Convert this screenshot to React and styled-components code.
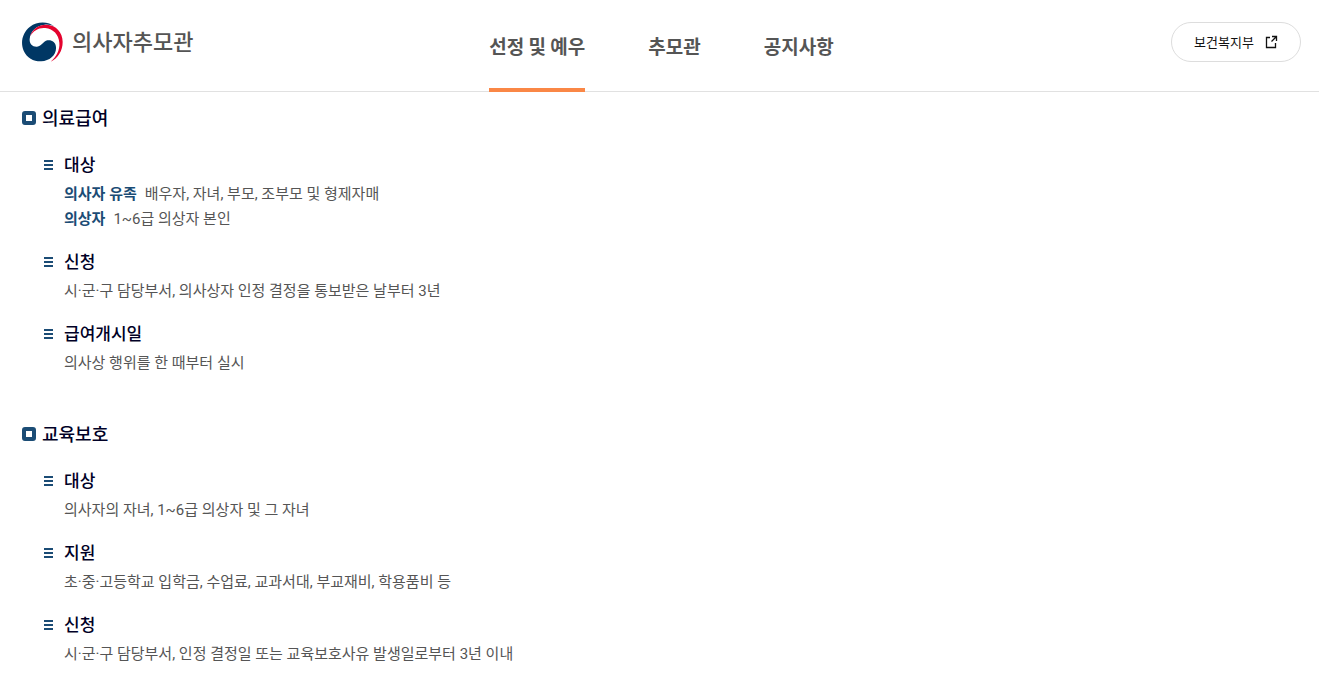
import React from "react";
import styled, { createGlobalStyle } from "styled-components";

const GlobalStyle = createGlobalStyle`
  *, *::before, *::after { box-sizing: border-box; }
  body {
    margin: 0;
    background: #fff;
    color: #555;
    font-family: Roboto, "Noto Sans CJK KR", sans-serif;
    font-size: 15px;
    line-height: 25px;
  }
  h1, h2, h3, p, ul { margin: 0; padding: 0; }
  ul { list-style: none; }
  a { color: inherit; text-decoration: none; }
`;

const Header = styled.header`
  display: grid;
  grid-template-columns: 1fr auto 1fr;
  height: 92px;
  padding: 0 18px 0 22px;
  border-bottom: 1px solid #e1e1e1;
`;

const Brand = styled.a`
  display: flex;
  align-items: center;
  justify-self: start;
  gap: 9px;
  height: 40px;
  margin-top: 22px;
  color: #555;
  font-size: 22px;
  font-weight: 500;
  white-space: nowrap;
`;

const Nav = styled.nav`
  display: flex;
  gap: 63px;
  font-family: "Noto Sans CJK KR", sans-serif;
`;

const NavLink = styled.a`
  display: flex;
  align-items: center;
  height: 92px;
  padding-top: 3px;
  border-bottom: 4px solid ${(p) => (p.$active ? "#fa8746" : "transparent")};
  color: #555;
  font-size: 19px;
  font-weight: 700;
  white-space: nowrap;
`;

const SiteLink = styled.a`
  display: flex;
  align-items: center;
  justify-content: center;
  justify-self: end;
  gap: 10px;
  height: 40px;
  width: 130px;
  margin-top: 22px;
  border: 1px solid #ddd;
  border-radius: 20px;
  color: #111;
  font-size: 13px;
  white-space: nowrap;
`;

const Main = styled.main`
  display: flex;
  flex-direction: column;
  gap: 45px;
  padding: 13px 22px 24px;
`;

const SectionTitle = styled.h2`
  display: flex;
  align-items: center;
  gap: 6px;
  margin-bottom: 19px;
  color: #000026;
  font-size: 18px;
  font-weight: 500;
  line-height: 28px;

  &::before {
    content: "";
    width: 14px;
    height: 14px;
    margin-bottom: 2px;
    border: 4px solid #1b4c75;
    border-radius: 3px;
  }
`;

const ItemList = styled.ul`
  display: flex;
  flex-direction: column;
  gap: 17px;
  padding-left: 22px;
`;

const ItemTitle = styled.h3`
  display: flex;
  align-items: center;
  gap: 10px;
  margin-bottom: 3px;
  color: #000026;
  font-size: 17px;
  font-weight: 500;
  line-height: 27px;
`;

const Line = styled.p`
  padding-left: 20px;
`;

const Term = styled.strong`
  margin-right: 8px;
  color: #1b4c75;
  font-weight: 700;
`;

function Emblem() {
  return (
    <svg width="41" height="40" viewBox="0 0 123 120" aria-hidden="true">
      <path
        fill="#003764"
        d="M98 14C80-2 47-4 24 14C2 31-6 61 5 86C15 108 36 119 58 118C83 117 104 99 102 75C101 60 89 53 76 55C64 57 60 73 45 74C31 75 22 65 23 51C25 28 43 10 68 8C79 7 89 9 98 14Z"
      />
      <path
        fill="#e4032e"
        d="M24 43C32 20 51 7 74 8C102 9 122 31 122 60C122 86 108 109 86 119C103 104 114 84 112 62C110 37 94 21 70 18C51 16 35 25 24 43Z"
      />
    </svg>
  );
}

function ExternalIcon() {
  return (
    <svg width="14" height="14" viewBox="0 0 14 14" fill="none" stroke="#111" strokeWidth="1.3" aria-hidden="true">
      <path d="M6 2.5H2.5V12.5H11.5V8M8 1.5H12.5V6M12.5 1.5L7.5 6.5" />
    </svg>
  );
}

function ListIcon() {
  return (
    <svg width="10" height="11" viewBox="0 0 10 11" fill="#1b4c75" aria-hidden="true">
      <path d="M0 0H9V2H0ZM0 4H9V6H0ZM0 8H9V10H0Z" />
    </svg>
  );
}

const menu = ["선정 및 예우", "추모관", "공지사항"];

const sections = [
  {
    title: "의료급여",
    items: [
      {
        title: "대상",
        lines: [
          { term: "의사자 유족", text: "배우자, 자녀, 부모, 조부모 및 형제자매" },
          { term: "의상자", text: "1~6급 의상자 본인" },
        ],
      },
      { title: "신청", lines: [{ text: "시·군·구 담당부서, 의사상자 인정 결정을 통보받은 날부터 3년" }] },
      { title: "급여개시일", lines: [{ text: "의사상 행위를 한 때부터 실시" }] },
    ],
  },
  {
    title: "교육보호",
    items: [
      { title: "대상", lines: [{ text: "의사자의 자녀, 1~6급 의상자 및 그 자녀" }] },
      { title: "지원", lines: [{ text: "초·중·고등학교 입학금, 수업료, 교과서대, 부교재비, 학용품비 등" }] },
      { title: "신청", lines: [{ text: "시·군·구 담당부서, 인정 결정일 또는 교육보호사유 발생일로부터 3년 이내" }] },
    ],
  },
];

export default function App() {
  return (
    <>
      <GlobalStyle />
      <Header>
        <Brand href="#">
          <Emblem />
          의사자추모관
        </Brand>
        <Nav>
          {menu.map((label, i) => (
            <NavLink key={label} href="#" $active={i === 0}>
              {label}
            </NavLink>
          ))}
        </Nav>
        <SiteLink href="#">
          보건복지부
          <ExternalIcon />
        </SiteLink>
      </Header>
      <Main>
        {sections.map((section) => (
          <section key={section.title}>
            <SectionTitle>{section.title}</SectionTitle>
            <ItemList>
              {section.items.map((item) => (
                <li key={item.title}>
                  <ItemTitle>
                    <ListIcon />
                    {item.title}
                  </ItemTitle>
                  {item.lines.map((line) => (
                    <Line key={line.text}>
                      {line.term && <Term>{line.term}</Term>}
                      {line.text}
                    </Line>
                  ))}
                </li>
              ))}
            </ItemList>
          </section>
        ))}
      </Main>
    </>
  );
}
